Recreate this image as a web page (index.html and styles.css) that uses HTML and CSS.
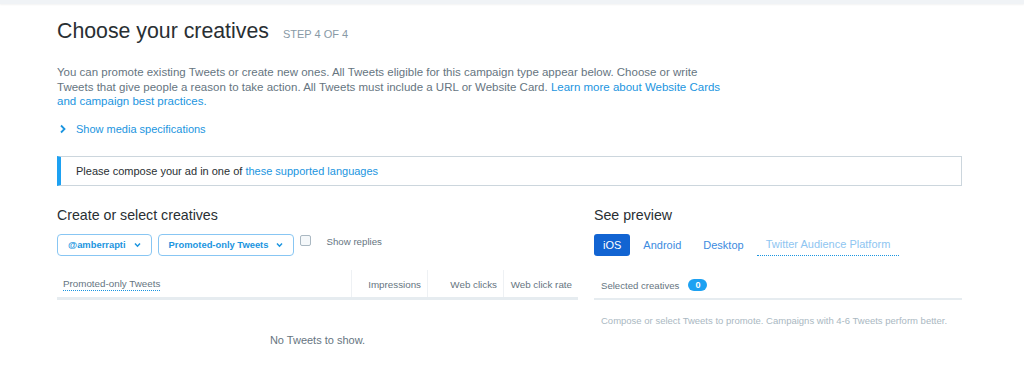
FILE: index.html
```html
<!DOCTYPE html>
<html lang="en">
<head>
<meta charset="utf-8">
<title>Choose your creatives</title>
<link rel="stylesheet" href="styles.css">
</head>
<body>
<div class="topbar"></div>
<main class="page">
  <header class="page-header">
    <h1 class="title">Choose your creatives</h1>
    <span class="step">STEP 4 OF 4</span>
  </header>
  <p class="intro">You can promote existing Tweets or create new ones. All Tweets eligible for this campaign type appear below. Choose or write Tweets that give people a reason to take action. All Tweets must include a URL or Website Card. <a class="link" href="#">Learn more about Website Cards and campaign best practices.</a></p>
  <a class="toggle" href="#">
    <svg class="toggle-icon" width="8" height="10" viewBox="0 0 8 10"><polyline points="2,1.5 5.5,5 2,8.5" fill="none" stroke="#1b95e0" stroke-width="1.8"/></svg>
    <span>Show media specifications</span>
  </a>
  <div class="notice">Please compose your ad in one of <a class="link" href="#">these supported languages</a></div>

  <div class="columns">
    <section class="col-left">
      <h2 class="section-title">Create or select creatives</h2>
      <div class="controls">
        <button class="dropdown">@amberrapti <svg class="caret" width="7" height="6" viewBox="0 0 7 6"><polyline points="1,1.5 3.5,4.2 6,1.5" fill="none" stroke="#1b95e0" stroke-width="1.5"/></svg></button>
        <button class="dropdown">Promoted-only Tweets <svg class="caret" width="7" height="6" viewBox="0 0 7 6"><polyline points="1,1.5 3.5,4.2 6,1.5" fill="none" stroke="#1b95e0" stroke-width="1.5"/></svg></button>
        <label class="check"><span class="box"></span><span class="check-label">Show replies</span></label>
      </div>
      <div class="table-head">
        <div class="th th-main"><span class="dotted">Promoted-only Tweets</span></div>
        <div class="th th-num th-imp">Impressions</div>
        <div class="th th-num th-clicks">Web clicks</div>
        <div class="th th-num th-rate">Web click rate</div>
      </div>
      <div class="empty">No Tweets to show.</div>
    </section>

    <section class="col-right">
      <h2 class="section-title">See preview</h2>
      <nav class="tabs">
        <span class="tab tab-active">iOS</span>
        <span class="tab">Android</span>
        <span class="tab tab-desktop">Desktop</span>
        <span class="tab tab-tap">Twitter Audience Platform</span>
      </nav>
      <div class="selected">
        <span class="selected-label">Selected creatives</span>
        <span class="badge">0</span>
      </div>
      <p class="hint">Compose or select Tweets to promote. Campaigns with 4-6 Tweets perform better.</p>
    </section>
  </div>
</main>
</body>
</html>
```

FILE: styles.css
```css
* { box-sizing: border-box; }
html, body { margin: 0; padding: 0; background: #fff; }
body {
  font-family: "Liberation Sans", Arial, sans-serif;
  color: #292f33;
}
.topbar {
  height: 4px;
  background: #f0f3f6;
  box-shadow: 0 1px 2px rgba(0,0,0,0.05);
}
.page {
  width: 905px;
  margin-left: 57px;
}
.page-header {
  display: flex;
  align-items: baseline;
  margin-top: 14px;
  height: 26px;
}
.title {
  margin: 0;
  font-size: 21.3px;
  line-height: 26px;
  font-weight: normal;
  color: #292f33;
}
.step {
  margin-left: 14px;
  font-size: 11px;
  color: #8899a6;
}
.intro {
  margin: 21px 0 0;
  width: 668px;
  font-size: 11.5px;
  line-height: 14.5px;
  color: #66757f;
}
.link { color: #1b95e0; text-decoration: none; }
.toggle {
  display: flex;
  align-items: center;
  margin-top: 13px;
  height: 14px;
  font-size: 11px;
  color: #1b95e0;
  text-decoration: none;
}
.toggle-icon { margin: 0 9px 0 2px; }
.notice {
  margin-top: 20px;
  height: 30px;
  line-height: 28px;
  padding-left: 15px;
  border: 1px solid #ccd6dd;
  border-left: 4px solid #1da1f2;
  font-size: 11px;
  color: #292f33;
}
.columns {
  display: flex;
  gap: 16px;
  margin-top: 20px;
}
.col-left { width: 521px; }
.col-right { flex: 1; }
.section-title {
  margin: 0;
  font-size: 14.2px;
  line-height: 18px;
  font-weight: normal;
  color: #292f33;
}
.controls {
  display: flex;
  align-items: flex-start;
  margin-top: 10px;
  height: 22px;
}
.dropdown {
  display: flex;
  align-items: center;
  gap: 8px;
  height: 22px;
  margin-right: 6px;
  padding: 0 10px 0 10px;
  border: 1px solid #88c6f3;
  border-radius: 4px;
  background: #fff;
  font-family: inherit;
  font-size: 9.4px;
  font-weight: bold;
  color: #1b95e0;
}
.caret { margin-top: 1px; }
.check { display: flex; align-items: flex-start; }
.box {
  width: 11px;
  height: 11px;
  margin-top: 1px;
  border: 1px solid #aab8c2;
  border-radius: 2px;
  background: #f5f8fa;
}
.check-label {
  margin-left: 15px;
  margin-top: 2px;
  font-size: 9.7px;
  color: #66757f;
}
.table-head {
  display: flex;
  margin-top: 14px;
  height: 30px;
  border-bottom: 3px solid #e6ecf0;
}
.th {
  display: flex;
  align-items: center;
  padding-top: 3px;
  font-size: 9.8px;
  color: #66757f;
  height: 27px;
}
.th-main { flex: 1; padding-left: 6px; }
.dotted {
  color: #66757f;
  border-bottom: 1px dotted #1b95e0;
  padding-bottom: 1px;
}
.th-num {
  justify-content: flex-end;
  border-left: 1px solid #eef1f4;
  padding-right: 6px;
}
.th-imp { width: 76px; }
.th-clicks { width: 76px; }
.th-rate { width: 75px; }
.empty {
  margin-top: 34px;
  text-align: center;
  font-size: 11px;
  color: #66757f;
}
.tabs {
  display: flex;
  align-items: flex-start;
  gap: 13px;
  margin-top: 10px;
  height: 22px;
}
.tab {
  font-size: 11px;
  color: #3b8be0;
  line-height: 22px;
}
.tab-active {
  background: #1264d2;
  color: #fff;
  border-radius: 3px;
  padding: 0 9px;
}
.tab-desktop { margin-left: 9px; }
.tab-tap {
  color: #8ec5f1;
  padding: 0 9px;
  line-height: 21px;
  border-bottom: 1px dotted #1b95e0;
}
.selected {
  display: flex;
  align-items: center;
  height: 27px;
  margin-top: 17px;
  padding-left: 7px;
  border-bottom: 2px solid #e6ecf0;
}
.selected-label { font-size: 9.6px; color: #66757f; }
.badge {
  margin-left: 9px;
  min-width: 19px;
  height: 12px;
  border-radius: 6px;
  background: #1da1f2;
  color: #fff;
  font-size: 9px;
  font-weight: bold;
  text-align: center;
  line-height: 12px;
}
.hint {
  margin: 15px 0 0 7px;
  font-size: 9.5px;
  color: #aab8c2;
}
```
